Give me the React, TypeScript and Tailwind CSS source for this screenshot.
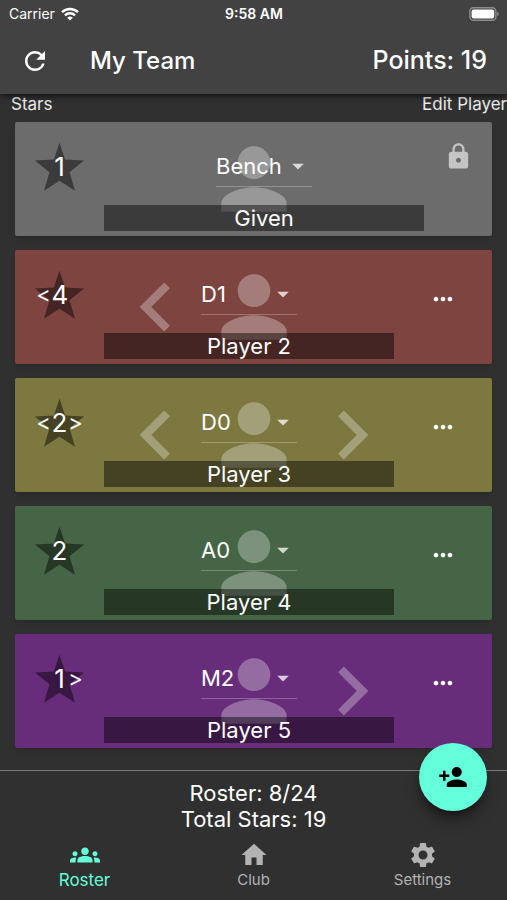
import React, { useState } from 'react';
import {
  MdArrowDropDown,
  MdChevronLeft,
  MdChevronRight,
  MdGroups,
  MdHome,
  MdLock,
  MdMoreHoriz,
  MdPerson,
  MdPersonAdd,
  MdRefresh,
  MdSettings,
} from 'react-icons/md';

interface Player {
  name: string;
  stars: number;
  position: string;
  color: string;
  locked?: boolean;
  canDrop?: boolean;
  canRaise?: boolean;
  moveLeft?: boolean;
  moveRight?: boolean;
}

const POSITIONS = ['Bench', 'D0', 'D1', 'A0', 'M2'];

const PLAYERS: Player[] = [
  { name: 'Given', stars: 1, position: 'Bench', color: 'bg-[#6c6c6c]', locked: true },
  { name: 'Player 2', stars: 4, position: 'D1', color: 'bg-[#7d4440]', canDrop: true, moveLeft: true },
  { name: 'Player 3', stars: 2, position: 'D0', color: 'bg-[#7c7840]', canDrop: true, canRaise: true, moveLeft: true, moveRight: true },
  { name: 'Player 4', stars: 2, position: 'A0', color: 'bg-[#466446]' },
  { name: 'Player 5', stars: 1, position: 'M2', color: 'bg-[#672d7a]', canRaise: true, moveRight: true },
];

const StatusBar: React.FC = () => (
  <div className="grid h-7 grid-cols-3 items-center pr-2 pl-[9px] text-sm">
    <div className="flex items-center gap-1.5">
      <span>Carrier</span>
      <svg viewBox="0 0 18 14" className="h-3.5 w-[18px]" fill="none" stroke="currentColor" strokeWidth="2.4">
        <path d="M1 5.2a11.6 11.6 0 0 1 16 0" />
        <path d="M3.9 8.3a7.4 7.4 0 0 1 10.2 0" />
        <path d="M9 13.6 6.2 10.8a4 4 0 0 1 5.600 0z" fill="currentColor" stroke="none" />
      </svg>
    </div>
    <div className="text-center font-semibold">9:58 AM</div>
    <svg viewBox="0 0 30 14" className="h-3.5 w-[30px] justify-self-end">
      <rect x="0.9" y="0.7" width="26" height="12.6" rx="3.6" fill="none" stroke="#8c8c8c" strokeWidth="1.4" />
      <rect x="2.6" y="2.4" width="22.6" height="9.2" rx="2" fill="#fff" />
      <path d="M28.2 5v4c.9-.3 1.500-1 1.500-2s-.6-1.700-1.500-2z" fill="#8c8c8c" />
    </svg>
  </div>
);

const StarRating: React.FC<{ player: Player }> = ({ player }) => (
  <div className="relative flex h-[88px] items-center justify-center">
    <svg viewBox="0 0 24 24" className="absolute size-[59px] text-black/45" fill="currentColor">
      <path d="M12 2.200 14.300 9.200 22 9.600 16.100 14.300 18.300 21.900 12 17.800 5.700 21.900 7.900 14.300 2 9.600 9.700 9.200z" />
    </svg>
    <div className="relative flex items-center">
      <span className="w-4 text-center text-[22px]">{player.canDrop && '<'}</span>
      <span className="w-4 text-center text-[26px]">{player.stars}</span>
      <span className="w-4 text-center text-[22px]">{player.canRaise && '>'}</span>
    </div>
  </div>
);

const PlayerCard: React.FC<{ player: Player }> = ({ player }) => {
  const [position, setPosition] = useState(player.position);
  const columns = player.locked ? 'grid-cols-[89px_1fr_68px]' : 'grid-cols-[89px_1fr_98px]';

  return (
    <li className={`relative grid h-[114px] rounded-xs shadow-md ${columns} ${player.color}`}>
      {/* Silhouette with the move arrows on both sides */}
      <div className="absolute inset-0 grid grid-cols-[98px_98px_98px] items-center justify-center text-white/30">
        {player.moveLeft ? (
          <button aria-label={`Move ${player.name} left`}>
            <MdChevronLeft className="size-[98px]" />
          </button>
        ) : (
          <span />
        )}
        <MdPerson className="size-[98px]" />
        {player.moveRight && (
          <button aria-label={`Move ${player.name} right`}>
            <MdChevronRight className="size-[98px]" />
          </button>
        )}
      </div>

      <StarRating player={player} />

      <div className="pointer-events-none relative flex flex-col items-center justify-between pt-6 pb-[5px]">
        <div className="pointer-events-auto relative w-24 border-b border-white/25">
          <select
            aria-label={`Position of ${player.name}`}
            value={position}
            onChange={(e) => setPosition(e.target.value)}
            className="block h-10 w-full appearance-none bg-transparent text-[22px] outline-none"
          >
            {POSITIONS.map((p) => (
              <option key={p} className="text-black">
                {p}
              </option>
            ))}
          </select>
          <MdArrowDropDown className="pointer-events-none absolute top-1.5 right-0 size-7 text-white/75" />
        </div>
        <div className="h-[26px] w-full bg-black/45 text-center text-[22px] leading-[26px]">{player.name}</div>
      </div>

      <div className="relative flex justify-center">
        {player.locked ? (
          <MdLock className="mt-5 size-[29px] text-white/60" />
        ) : (
          <button className="mt-[35px] size-7" aria-label={`Edit ${player.name}`}>
            <MdMoreHoriz className="size-7" />
          </button>
        )}
      </div>
    </li>
  );
};

const App: React.FC = () => (
  <div className="flex min-h-screen flex-col bg-[#303030] font-['Inter',sans-serif] text-white">
    <header className="relative z-10 bg-[#424242] shadow-md shadow-black/40">
      <StatusBar />
      <div className="flex h-[66px] items-center px-5">
        <button aria-label="Refresh">
          <MdRefresh className="size-[30px]" />
        </button>
        <h1 className="ml-10 flex-1 text-2xl font-medium">My Team</h1>
        <span className="text-[25px] font-medium">Points: 19</span>
      </div>
    </header>

    <main className="flex-1">
      <div className="flex h-7 justify-between pl-[11px] text-[17px] leading-5 text-white/90">
        <span>Stars</span>
        <span>Edit Player</span>
      </div>
      <ul className="flex flex-col gap-3.5 px-[15px] pb-5">
        {PLAYERS.map((player) => (
          <PlayerCard key={player.name} player={player} />
        ))}
      </ul>
    </main>

    <section className="relative border-t border-[#7c7c7c] pt-[9px] text-center text-[22px] leading-[26px]">
      <p>Roster: 8/24</p>
      <p>Total Stars: 19</p>
      <button
        aria-label="Add player"
        className="absolute -top-7 right-5 flex size-[68px] items-center justify-center rounded-full bg-[#64ffda] text-black shadow-lg shadow-black/50"
      >
        <MdPersonAdd className="size-[30px]" />
      </button>
    </section>

    <nav className="grid grid-cols-3 pt-2 pb-2.5 text-[15px] text-[#b3b3b3]">
      <a href="#roster" className="flex flex-col items-center text-[17px] text-[#64ffda]">
        <MdGroups className="size-[30px]" />
        <span className="leading-5">Roster</span>
      </a>
      <a href="#club" className="flex flex-col items-center">
        <MdHome className="size-[30px]" />
        <span className="leading-5">Club</span>
      </a>
      <a href="#settings" className="flex flex-col items-center">
        <MdSettings className="size-[30px]" />
        <span className="leading-5">Settings</span>
      </a>
    </nav>
  </div>
);

export default App;
